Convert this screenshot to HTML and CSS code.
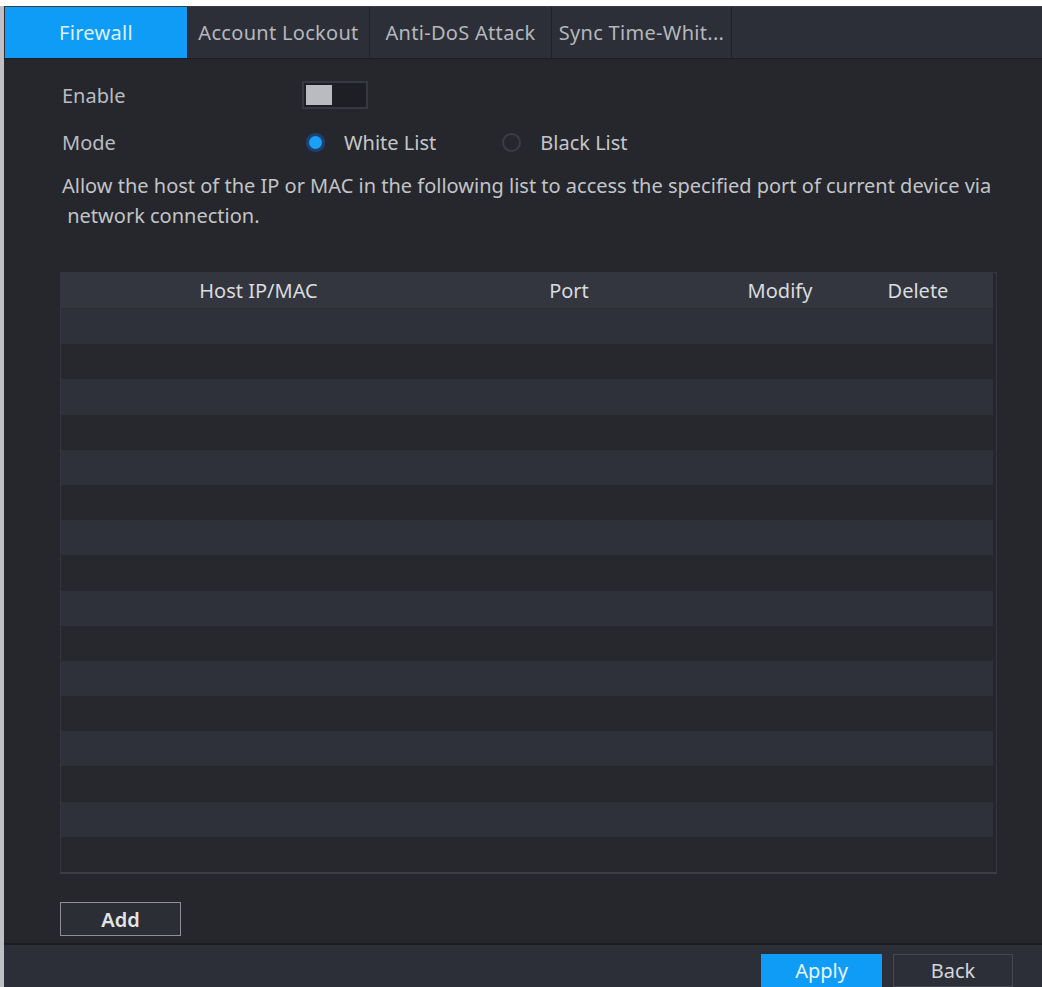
FILE: index.html
```html
<!DOCTYPE html>
<html lang="en">
<head>
<meta charset="utf-8">
<title>Firewall</title>
<link rel="stylesheet" href="styles.css">
</head>
<body>
<div class="window">
  <nav class="tabs">
    <div class="tab active">Firewall</div>
    <div class="tab">Account Lockout</div>
    <div class="tab">Anti-DoS Attack</div>
    <div class="tab last">Sync Time-Whit...</div>
  </nav>

  <main class="content">
    <div class="field">
      <span class="label">Enable</span>
      <span class="toggle"><span class="knob"></span></span>
    </div>
    <div class="field">
      <span class="label">Mode</span>
      <label class="radio checked"><span class="dot"></span>White List</label>
      <label class="radio"><span class="dot"></span>Black List</label>
    </div>
    <p class="desc">Allow the host of the IP or MAC in the following list to access the specified port of current device via<br>&nbsp;network connection.</p>

    <div class="table">
      <div class="thead">
        <span class="c-host">Host IP/MAC</span>
        <span class="c-port">Port</span>
        <span class="c-mod">Modify</span>
        <span class="c-del">Delete</span>
      </div>
      <div class="tbody">
        <div class="row"></div><div class="row"></div><div class="row"></div><div class="row"></div>
        <div class="row"></div><div class="row"></div><div class="row"></div><div class="row"></div>
        <div class="row"></div><div class="row"></div><div class="row"></div><div class="row"></div>
        <div class="row"></div><div class="row"></div><div class="row"></div><div class="row"></div>
      </div>
    </div>

    <div class="actions">
      <button class="btn">Add</button>
    </div>
  </main>

  <footer class="footer">
    <button class="btn primary">Apply</button>
    <button class="btn back">Back</button>
  </footer>
</div>
</body>
</html>
```

FILE: styles.css
```css
* { box-sizing: border-box; }

html, body {
  margin: 0;
  background: #ffffff;
}

body {
  padding-top: 6px;
  font-family: "Noto Sans", "Open Sans", sans-serif;
  font-size: 20px;
  color: #c2c4c8;
}

.window {
  height: 981px;
  background: #25272c;
  border-left: 4px solid #bfc0c3;
  display: flex;
  flex-direction: column;
  overflow: hidden;
}

/* tab strip */
.tabs {
  display: flex;
  height: 53px;
  padding-left: 1px;
  background: #2c2f37;
  border-top: 1px solid #3a3c42;
  border-bottom: 1px solid #1c1e22;
}

.tab {
  width: 182px;
  display: flex;
  align-items: center;
  justify-content: center;
  font-size: 20px;
  letter-spacing: 0.3px;
  color: #b4b7bd;
  border-right: 1px solid #1f2126;
}

.tab.active {
  background: #0f9cf6;
  color: #dcf1ff;
  width: 183px;
}

.tab.last {
  width: 180px;
}

/* form area */
.content {
  flex: 1;
  padding: 22px 47px 0 56px;
}

.field {
  display: flex;
  align-items: center;
  height: 28px;
  margin-bottom: 19px;
}

.label {
  width: 242px;
  padding-left: 2px;
  color: #b9bcc2;
}

.toggle {
  width: 66px;
  height: 28px;
  background: #1d1f24;
  border: 2px solid #363940;
  padding: 2px;
  display: flex;
}

.knob {
  width: 26px;
  height: 100%;
  background: #b9bbc0;
}

.radio {
  display: flex;
  align-items: center;
  color: #c4c6ca;
  margin-right: 62px;
}

.dot {
  width: 19px;
  height: 19px;
  border-radius: 50%;
  border: 2px solid #3a3d44;
  margin: 0 19px 0 4px;
}

.radio.checked .dot {
  border: 3px solid #21406a;
  background: #18a0f8;
  box-shadow: 0 0 0 1px #1b2d47;
}

.desc {
  margin: -4px 0 0 2px;
  line-height: 30px;
  color: #c2c4c8;
  white-space: nowrap;
}

/* host list */
.table {
  margin-top: 41px;
  width: 937px;
  border: 1px solid #33363d;
  border-bottom: 2px solid #3c3f46;
  padding-right: 3px;
}

.thead {
  display: flex;
  height: 36px;
  align-items: center;
  background: #33363e;
  border-bottom: 1px solid #2a2c32;
  color: #d9dbdf;
}

.thead span { text-align: center; }
.c-host { width: 395px; }
.c-port { width: 226px; }
.c-mod { width: 196px; }
.c-del { width: 80px; }

.row {
  height: 35.2px;
  background: #2e3139;
}

.row:nth-child(even) {
  background: #26282d;
}

.actions {
  padding-top: 28px;
}

.btn {
  font-family: inherit;
  font-size: 20px;
  height: 34px;
  width: 121px;
  background: #2b2e35;
  color: #e2e3e6;
  border: 1px solid #8e9095;
  font-weight: 600;
  padding: 0;
}

/* bottom bar */
.footer {
  height: 44px;
  background: #2c2f38;
  border-top: 2px solid #1a1c20;
  display: flex;
  justify-content: flex-end;
  padding: 9px 29px 0 0;
  gap: 11px;
}

.btn.primary {
  background: #0f9cf6;
  border: none;
  color: #e6f4ff;
  font-weight: 400;
  width: 121px;
  height: 33px;
  line-height: 33px;
}

.btn.back {
  background: #2c2f38;
  border: 1px solid #454850;
  color: #d3d5d9;
  font-weight: 400;
  width: 120px;
  height: 33px;
  line-height: 31px;
}
```
